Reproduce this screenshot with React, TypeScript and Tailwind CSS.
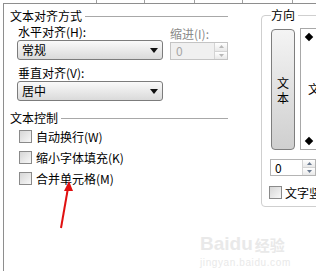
import React from "react";

const cjk = { fontFamily: '"Noto Sans CJK SC", "Noto Sans", sans-serif' };

function Arrow() {
  return (
    <svg width="8" height="5" viewBox="0 0 8 5">
      <polygon points="0,0 8,0 4,5" fill="#111" />
    </svg>
  );
}

function Combo({ value }: { value: string }) {
  return (
    <div className="h-[20px] w-[146px] flex items-center justify-between rounded-[3px] border border-[#7c7c7c] bg-gradient-to-b from-[#fafafa] to-[#dadada] pl-[4px] pr-[4px]">
      <span className="text-[12px] leading-[14px] text-black">{value}</span>
      <Arrow />
    </div>
  );
}

function SpinButtons({ disabled }: { disabled?: boolean }) {
  const c = disabled ? "#b8b8b8" : "#6a7a90";
  return (
    <div className="w-[13px] h-full flex flex-col border-l border-[#d4d4d4]">
      <div className="flex-1 flex items-center justify-center bg-gradient-to-b from-white to-[#e8e8e8] border-b border-[#d4d4d4]">
        <svg width="5" height="3" viewBox="0 0 5 3">
          <polygon points="0,3 5,3 2.5,0" fill={c} />
        </svg>
      </div>
      <div className="flex-1 flex items-center justify-center bg-gradient-to-b from-white to-[#e8e8e8]">
        <svg width="5" height="3" viewBox="0 0 5 3">
          <polygon points="0,0 5,0 2.5,3" fill={c} />
        </svg>
      </div>
    </div>
  );
}

function Check({ label }: { label: string }) {
  return (
    <div className="flex items-center gap-[4px] h-[13px]">
      <div className="w-[13px] h-[13px] border border-[#8a8a8a] bg-gradient-to-br from-[#d6d6d6] to-[#f8f8f8]" />
      <span className="text-[12px] leading-[14px] text-black whitespace-nowrap">{label}</span>
    </div>
  );
}

function GroupHeader({ title }: { title: string }) {
  return (
    <div className="flex items-center h-[14px]">
      <span className="text-[12px] leading-[14px] text-black whitespace-nowrap">{title}</span>
      <div className="flex-1 ml-[3px] border-t border-[#a8a8a8]" />
    </div>
  );
}

export default function App() {
  return (
    <div className="relative w-[316px] h-[271px] bg-white overflow-hidden flex flex-col" style={cjk}>
      {/* tab strip */}
      <div className="flex h-[3px] pl-[3px]">
        <div className="w-[94px] border-r border-[#a0a0a0]" />
        <div className="w-[48px] border-r border-[#a0a0a0]" />
        <div className="w-[50px] border-r border-[#a0a0a0]" />
        <div className="w-[48px] border-r border-[#a0a0a0]" />
        <div className="w-[50px] border-r border-[#a0a0a0]" />
      </div>

      {/* page */}
      <div className="flex-1 ml-[3px] border-l border-t border-[#8e8e8e] flex">
        {/* left column */}
        <div className="w-[220px] ml-[6px] pt-[5px] flex flex-col">
          <GroupHeader title="文本对齐方式" />
          <div className="flex pl-[7px] gap-[7px]">
            <div className="flex flex-col">
              <span className="mt-[2px] pl-[1px] text-[12px] leading-[14px] text-black">水平对齐(H):</span>
              <div className="mt-[1px]">
                <Combo value="常规" />
              </div>
              <span className="mt-[6px] pl-[1px] text-[12px] leading-[14px] text-black">垂直对齐(V):</span>
              <div className="mt-[1px]">
                <Combo value="居中" />
              </div>
            </div>
            <div className="flex flex-col">
              <span className="mt-[4px] text-[12px] leading-[14px] text-[#8a8a8a]">缩进(I):</span>
              <div className="mt-[1px] w-[58px] h-[18px] flex border border-[#c4c4c4] bg-[#f0f0f0]">
                <span className="flex-1 pl-[5px] text-[12px] leading-[16px] text-[#a6a6a6]">0</span>
                <SpinButtons disabled />
              </div>
            </div>
          </div>

          <div className="mt-[10px]">
            <GroupHeader title="文本控制" />
          </div>
          <div className="mt-[5px] pl-[9px] flex flex-col gap-[8px]">
            <Check label="自动换行(W)" />
            <Check label="缩小字体填充(K)" />
            <Check label="合并单元格(M)" />
          </div>
        </div>

        {/* right group */}
        <fieldset className="ml-[33px] mt-[4px] self-start w-[100px] shrink-0 border border-[#cfcfcf] rounded-[4px] pl-[9px] pb-[7px]">
          <legend className="pr-[3px] text-[12px] leading-[14px] text-black">方向</legend>
          <div className="mt-[7px] flex gap-[5px]">
            <div className="w-[24px] h-[121px] rounded-[4px] border border-[#7e7e7e] bg-gradient-to-b from-[#f4f4f4] to-[#cfcfcf] flex flex-col items-center justify-center text-[12px] leading-[15px] text-black">
              <span>文</span>
              <span>本</span>
            </div>
            <div className="-mt-[1px] w-[60px] h-[122px] border border-[#a8a8a8] bg-white flex flex-col justify-between py-[5px] pl-[5px]">
              <div className="w-[6px] h-[6px] bg-black rotate-45" />
              <span className="pl-[2px] text-[12px] leading-[14px] text-black">文本</span>
              <div className="w-[6px] h-[6px] bg-black rotate-45" />
            </div>
          </div>
          <div className="mt-[9px] -ml-[1px] w-[46px] h-[17px] flex border border-[#b4b4b4] bg-white">
            <span className="flex-1 pl-[4px] text-[12px] leading-[15px] text-black">0</span>
            <SpinButtons />
          </div>
          <div className="mt-[10px] -ml-[2px] flex items-center gap-[3px] h-[13px]">
            <div className="w-[13px] h-[13px] shrink-0 border border-[#8a8a8a] bg-gradient-to-br from-[#d6d6d6] to-[#f8f8f8]" />
            <span className="text-[12px] leading-[14px] text-black whitespace-nowrap">文字竖排(Z)</span>
          </div>
        </fieldset>
      </div>

      {/* red annotation arrow */}
      <svg className="absolute left-0 top-0 pointer-events-none" width="316" height="271">
        <line x1="61" y1="228" x2="68" y2="188" stroke="#e01010" strokeWidth="2" />
        <polygon points="69,181 64,191 73,191" fill="#e01010" />
      </svg>

      {/* watermark */}
      <div className="absolute left-[200px] top-[229px] flex flex-col items-start pointer-events-none text-[#e9e9e9]" style={{ fontFamily: '"Liberation Sans", "Noto Sans CJK SC", sans-serif' }}>
        <div className="flex items-end h-[26px]">
          <span className="text-[19px] leading-[22px] font-bold">Bai</span>
          <span className="text-[19px] leading-[22px] font-bold">du</span>
          <span className="ml-[2px] text-[15px] leading-[20px] font-bold" style={cjk}>经验</span>
        </div>
        <span className="mt-[2px] text-[10px] leading-[11px] tracking-[0.6px]">jingyan.baidu.com</span>
      </div>
    </div>
  );
}
